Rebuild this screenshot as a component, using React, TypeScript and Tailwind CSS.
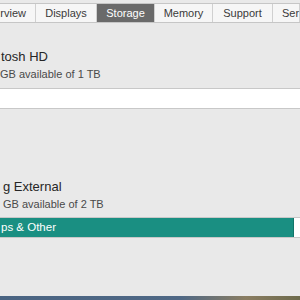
const TABS = [
  { label: 'rview', w: 'w-[36px] justify-end pr-[9px]' },
  { label: 'Displays', w: 'w-[61px] justify-center' },
  { label: 'Storage', w: 'w-[58px] justify-center', active: true },
  { label: 'Memory', w: 'w-[58px] justify-center' },
  { label: 'Support', w: 'w-[60px] justify-center' },
  { label: 'Ser', w: 'flex-1 justify-start pl-[9px]' },
];

function Disk({ name, info, indent, infoIndent, children }: { name: string; info: string; indent: string; infoIndent: string; children: React.ReactNode }) {
  return (
    <div className="flex flex-col">
      <div className={`${indent} text-[13px] leading-[16px] text-[#262626] whitespace-nowrap`}>{name}</div>
      <div className={`${infoIndent} mt-[2px] text-[11px] leading-[14px] text-[#4a4a4a] whitespace-nowrap`}>{info}</div>
      {children}
    </div>
  );
}

export default function App() {
  return (
    <div
      className="w-[300px] h-[300px] overflow-hidden flex flex-col bg-[#e9e9e9]"
      style={{ fontFamily: '"Liberation Sans", Arial, sans-serif' }}
    >
      <div className="flex-1 flex flex-col pt-[3px] overflow-hidden">
        <div className="flex h-[20px] border-y border-[#c6c6c6] bg-[#f6f6f6] shrink-0">
          {TABS.map((t) => (
            <div
              key={t.label}
              className={`${t.w} shrink-0 flex items-center text-[11px] border-r border-[#d0d0d0] whitespace-nowrap ${
                t.active ? 'bg-[#6a6a6a] text-white' : 'text-[#3a3a3a]'
              }`}
            >
              {t.label}
            </div>
          ))}
        </div>

        <div className="mt-[26px]">
          <Disk name="tosh HD" info="GB available of 1 TB" indent="pl-[1px]" infoIndent="pl-0">
            <div className="mt-[7px] h-[21px] bg-white border-y border-[#c8c8c8]" />
          </Disk>
        </div>

        <div className="mt-[70px]">
          <Disk name="g External" info="GB available of 2 TB" indent="pl-[3px]" infoIndent="pl-[3px]">
            <div className="mt-[6px] h-[21px] flex bg-white border-y border-[#c8c8c8]">
              <div className="w-[294px] bg-[#1a8f82] border-r border-[#127569] flex items-center text-[11.5px] text-white whitespace-nowrap">
                <span className="pl-[1px]">ps &amp; Other</span>
              </div>
            </div>
          </Disk>
        </div>
      </div>
      <div className="h-[4px] shrink-0 bg-[linear-gradient(90deg,#4a6482_0%,#4f6885_60%,#8a7d62_82%,#6d6a4c_100%)]" />
    </div>
  );
}
